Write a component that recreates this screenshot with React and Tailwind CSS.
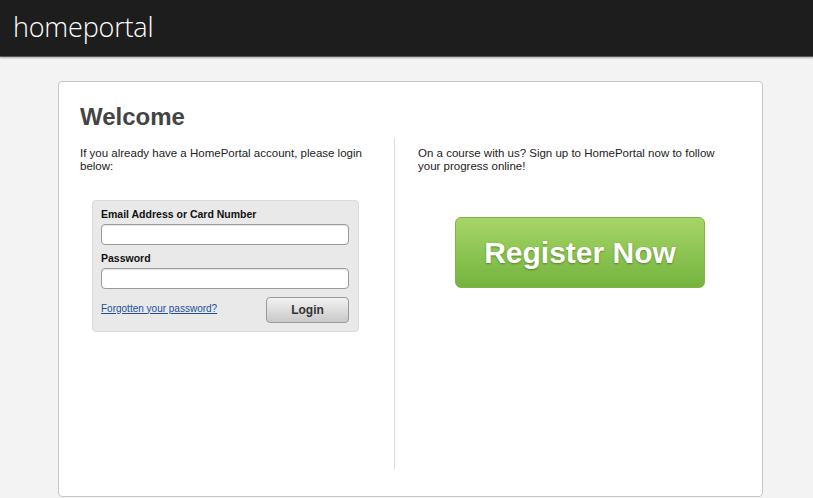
export default function App() {
  return (
    <div className="min-h-[498px] bg-[#f3f3f3] font-['Liberation_Sans',Arial,sans-serif]">
      <header className="h-[57px] border-b border-[#555] bg-[#1d1d1d] shadow-[0_1px_2px_rgba(0,0,0,0.3)] flex items-center px-[13px]">
        <span className="font-['Open_Sans',sans-serif] font-light text-[27px] leading-none text-white tracking-[-0.2px] -mt-[3px]">
          homeportal
        </span>
      </header>

      <div className="pl-[58px] pt-[24px] pb-[1px]">
        <div className="h-[416px] w-[705px] rounded-[4px] border border-[#c8c8c8] bg-white px-[21px] pt-[21px]">
          <h1 className="text-[24px] font-bold leading-[28px] text-[#444]">Welcome</h1>

          <div className="mt-[7px] flex">
            <div className="w-[314px] pt-[9px]">
              <p className="text-[11.5px] leading-[13px] text-[#222]">
                If you already have a HomePortal account, please login below:
              </p>

              <div className="ml-[12px] mt-[27px] w-[267px] rounded-[4px] border border-[#dadada] bg-[#e9e9e9] px-[8px] pt-[7px] pb-[8px]">
                <label className="block text-[10.5px] font-bold leading-[13px] text-[#111]">
                  Email Address or Card Number
                </label>
                <div className="mt-[3px] h-[21px] w-[248px] rounded-[4px] border border-[#9a9a9a] bg-white shadow-[inset_0_1px_1px_rgba(0,0,0,0.1)]" />
                <label className="mt-[7px] block text-[10.5px] font-bold leading-[13px] text-[#111]">
                  Password
                </label>
                <div className="mt-[3px] h-[21px] w-[248px] rounded-[4px] border border-[#9a9a9a] bg-white shadow-[inset_0_1px_1px_rgba(0,0,0,0.1)]" />
                <div className="mt-[8px] flex items-center justify-between w-[248px]">
                  <a href="#" className="text-[10px] leading-[12px] text-[#1f4f9a] underline mt-[-3px]">
                    Forgotten your password?
                  </a>
                  <button className="h-[26px] w-[83px] rounded-[4px] border border-[#9a9a9a] bg-gradient-to-b from-[#f2f2f2] to-[#c9c9c9] text-[12px] font-bold text-[#333]">
                    Login
                  </button>
                </div>
              </div>
            </div>

            <div className="h-[331px] w-px bg-[#ddd]" />

            <div className="pl-[23px] pt-[9px]">
              <p className="w-[310px] text-[11.5px] leading-[13px] text-[#222]">
                On a course with us? Sign up to HomePortal now to follow your progress online!
              </p>
              <button className="ml-[37px] mt-[44px] flex h-[71px] w-[250px] items-center justify-center rounded-[6px] border border-[#7fb345] bg-gradient-to-b from-[#a6d667] to-[#74b33e] text-[30px] font-bold text-white [text-shadow:0_1px_2px_rgba(60,90,20,0.6)]">
                Register Now
              </button>
            </div>
          </div>
        </div>
      </div>
    </div>
  )
}
